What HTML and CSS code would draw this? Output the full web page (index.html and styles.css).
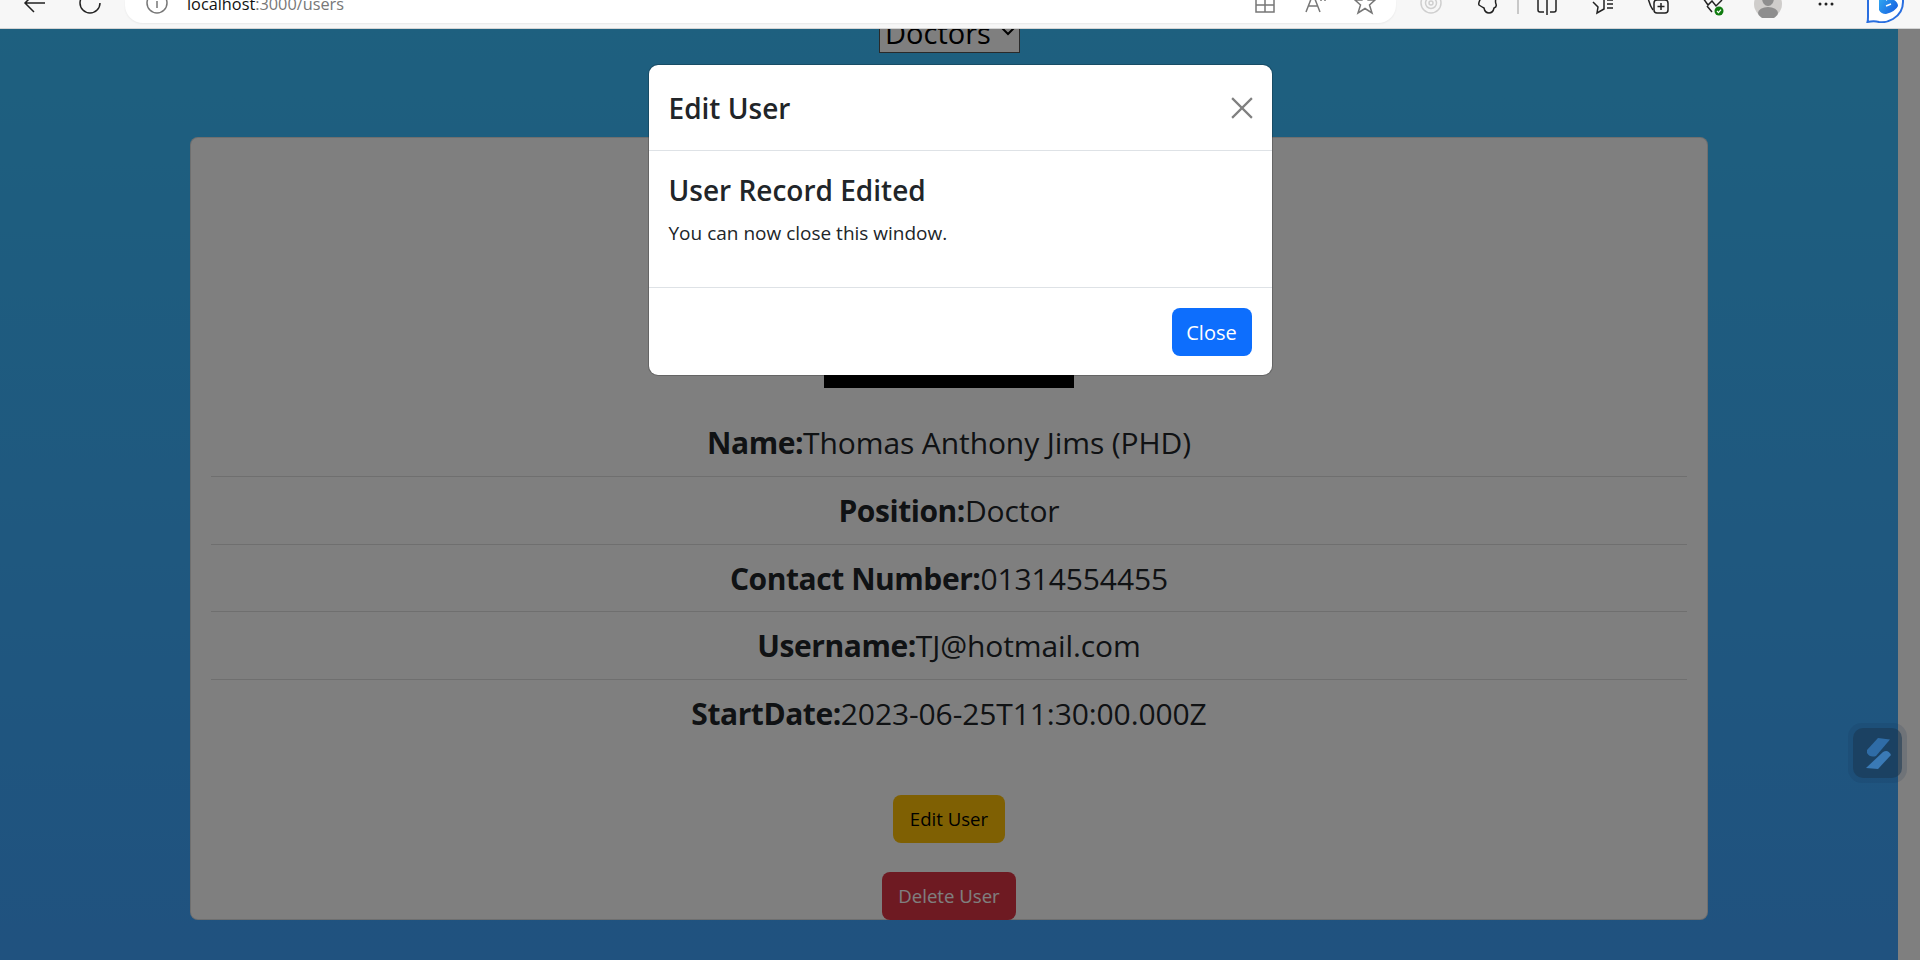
FILE: index.html
```html
<!DOCTYPE html>
<html lang="en">
<head>
    <meta charset="UTF-8">
    <title>Users</title>
    <link rel="stylesheet" href="styles.css">
</head>
<body>
    <div class="toolbar">
        <svg class="tb-icon tb-back" viewBox="0 0 32 32"><path d="M6 15H26M15 6L6 15L15 24"/></svg>
        <svg class="tb-icon tb-reload" viewBox="0 0 32 32"><path d="M26 15A10 10 0 1 1 16 5"/></svg>
        <div class="urlbar">
            <svg class="tb-icon tb-grey" viewBox="0 0 32 32"><circle cx="16" cy="15" r="10"/><path d="M16 13V20M16 9V11"/></svg>
            <span class="url"><span class="url-host">localhost</span>:3000/users</span>
            <div class="url-actions">
                <svg class="tb-icon tb-grey" viewBox="0 0 32 32"><path d="M7 4V24H25V4M7 17H25M16 4V24"/></svg>
                <svg class="tb-icon tb-grey" viewBox="0 0 32 32"><path d="M7 24L14 6L21 24M9.500 18H18.500M22 9V13M26 9V13"/></svg>
                <svg class="tb-icon tb-grey" viewBox="0 0 32 32"><path d="M16 5L19 12H26L20.500 17L23 25L16 20.500L9 25L11.500 17L6 12H13Z"/></svg>
            </div>
        </div>
        <svg class="tb-icon tb-faint tb-radar" viewBox="0 0 32 32"><circle cx="16" cy="15" r="10"/><circle cx="16" cy="15" r="5.500"/><circle cx="16" cy="15" r="2"/></svg>
        <svg class="tb-icon tb-puzzle" viewBox="0 0 32 32"><path d="M11 10Q8 15 9 17Q12 19 14 20Q15 25 19 25Q23 25 24 20Q27 19 26 16Q25 14 26 10"/></svg>
        <div class="tb-sep"></div>
        <svg class="tb-icon tb-split" viewBox="0 0 32 32"><path d="M16 8V27M7 8V22Q7 24 9 24H13M25 8V22Q25 24 23 24H19"/></svg>
        <svg class="tb-icon tb-next" viewBox="0 0 32 32"><path d="M6 14L11 19L10 25L17 21V10M20 12H26M20 16H26M20 20H26"/></svg>
        <svg class="tb-icon tb-next" viewBox="0 0 32 32"><path d="M5 10Q7 18 10 22"/><rect x="11" y="12" width="14" height="13" rx="3"/><path d="M18 15V22M14.500 18.500H21.500"/></svg>
        <svg class="tb-icon tb-heart" viewBox="0 0 32 32"><path d="M6 10L11 17L15 13L19 18L25 12M10 18L15 24"/><circle class="tb-badge" cx="22" cy="23" r="4.500"/><path class="tb-check" d="M20 23L21.500 24.600L24 21.600"/></svg>
        <svg class="tb-avatar" viewBox="0 0 28 28"><circle cx="14" cy="14" r="14" fill="#cfcdcb"/><ellipse cx="14" cy="8" rx="6" ry="8" fill="#8e8e8e"/><ellipse cx="14" cy="23" rx="10" ry="6" fill="#8e8e8e"/></svg>
        <svg class="tb-dots" viewBox="0 0 16 8"><circle cx="2" cy="4" r="1.500"/><circle cx="8" cy="4" r="1.500"/><circle cx="14" cy="4" r="1.500"/></svg>
        <svg class="tb-bing" viewBox="0 0 38 36">
            <defs>
                <linearGradient id="binggrad" x1="0" y1="0" x2="1" y2="1">
                    <stop offset="0" stop-color="#37bdf5"/>
                    <stop offset="1" stop-color="#1558e0"/>
                </linearGradient>
            </defs>
            <path d="M2 4V30Q2 33 1.500 35Q8 33.500 13 35Q20 36 27 32Q37 26 37 15V4" fill="#fff" stroke="#2a6fe0" stroke-width="2"/>
            <path d="M13 0H20V14L24 11Q32 14 32 19Q30 24 20 27Q15 27 13 23Z" fill="url(#binggrad)"/>
            <path d="M20 19L25 17" stroke="#fff" stroke-width="1.500"/>
        </svg>
    </div>

    <div class="viewport">
        <div class="page">
            <div class="select-strip">
                <select class="role-select">
                    <option>Doctors</option>
                </select>
            </div>
            <div class="card">
                <div class="user-photo"></div>
                <div class="info-row"><b>Name:</b>Thomas Anthony Jims (PHD)</div>
                <div class="info-row"><b>Position:</b>Doctor</div>
                <div class="info-row"><b>Contact Number:</b>01314554455</div>
                <div class="info-row"><b>Username:</b>TJ@hotmail.com</div>
                <div class="info-row"><b>StartDate:</b>2023-06-25T11:30:00.000Z</div>
                <button class="btn btn-edit">Edit User</button>
                <button class="btn btn-delete">Delete User</button>
            </div>
        </div>
        <div class="scrollbar"></div>

        <div class="backdrop">
            <div class="modal">
                <div class="modal-header">
                    <h5 class="modal-title">Edit User</h5>
                    <svg class="modal-close" viewBox="0 0 20 20"><path d="M1 1L19 19M19 1L1 19"/></svg>
                </div>
                <div class="modal-body">
                    <h4 class="modal-heading">User Record Edited</h4>
                    <p class="modal-text">You can now close this window.</p>
                </div>
                <div class="modal-footer">
                    <button class="btn btn-close">Close</button>
                </div>
            </div>
            <div class="float-widget">
                <div class="float-inner">
                    <svg class="float-logo" viewBox="33 28 49 50"><path d="M47 50L58 38L70 39.500L56 56Q50 58 47 53Z" fill="#2f6ca6"/><path d="M46 68L63 52Q68 49 71 55L58 69Z" fill="#3a7ab6"/></svg>
                </div>
            </div>
        </div>
    </div>
</body>
</html>
```

FILE: styles.css
```css
* {
    box-sizing: border-box;
}
html, body {
    height: 100%;
}
body {
    margin: 0;
    overflow: hidden;
    font-family: "Open Sans", "Liberation Sans", sans-serif;
    color: #212529;
}

/* browser bar, the top of it is cut off in the screenshot */
.toolbar {
    height: 29px;
    display: flex;
    align-items: flex-start;
    padding-left: 19px;
    background: #f7f7f7;
    border-bottom: 1px solid #d4d4d4;
    overflow: hidden;
}
.tb-icon {
    flex: none;
    width: 32px;
    height: 32px;
    margin-top: -12px;
    fill: none;
    stroke: #222;
    stroke-width: 1.5;
}
.tb-reload {
    margin-left: 23px;
}
.tb-grey {
    stroke: #777;
}
.tb-faint {
    stroke: #cfcfcf;
}
.urlbar {
    width: 1271px;
    height: 23px;
    margin-left: 19px;
    padding: 0 15px 0 16px;
    display: flex;
    align-items: flex-start;
    flex: none;
    background: #fff;
    border-radius: 0 0 18px 18px;
    box-shadow: 0 1px 2px rgba(0, 0, 0, 0.06);
}
.url {
    margin: -10px 0 0 14px;
    font-size: 16.300px;
    line-height: 28px;
    color: #777;
}
.url-host {
    color: #111;
}
.url-actions {
    margin-left: auto;
    display: flex;
    gap: 18px;
}
.tb-radar {
    margin-left: 19px;
}
.tb-puzzle {
    margin-left: 23px;
}
.tb-sep {
    width: 2px;
    height: 14px;
    margin-left: 15px;
    background: #c8c8c8;
}
.tb-split {
    margin-left: 12px;
}
.tb-next {
    margin-left: 24px;
}
.tb-heart {
    margin-left: 22px;
    overflow: visible;
}
.tb-badge {
    fill: #107c10;
    stroke: none;
}
.tb-check {
    stroke: #fff;
    stroke-width: 1.2;
}
.tb-avatar {
    flex: none;
    width: 28px;
    height: 28px;
    margin: -10px 0 0 25px;
}
.tb-dots {
    flex: none;
    width: 16px;
    height: 8px;
    margin: 0 0 0 36px;
    fill: #222;
}
.tb-bing {
    flex: none;
    width: 38px;
    height: 36px;
    margin: -13px 0 0 32px;
}

/* page */
.viewport {
    position: relative;
    height: 931px;
    display: flex;
    overflow: hidden;
}
.page {
    flex: 1;
    padding: 0 190px;
    background: linear-gradient(180deg, #3cc0ff 0%, #40a4fe 100%);
}
.scrollbar {
    width: 22px;
    background: #fff;
}
.select-strip {
    height: 24px;
    padding-left: 1px;
    display: flex;
    justify-content: center;
    align-items: flex-end;
}
.role-select {
    flex: none;
    width: 141px;
    height: 42px;
    padding-left: 5px;
    font-family: inherit;
    font-size: 29px;
    color: #000;
    appearance: none;
    background: #fff url("data:image/svg+xml,%3Csvg xmlns='http://www.w3.org/2000/svg' width='16' height='10'%3E%3Cpath d='M2 2L8 8L14 2' fill='none' stroke='%23000' stroke-width='2'/%3E%3C/svg%3E") no-repeat right 3px top 14px;
    border: 1px solid #555;
    border-radius: 0;
}
.card {
    height: 783px;
    margin-top: 84px;
    padding: 20px 20px 0;
    display: flex;
    flex-direction: column;
    align-items: center;
    background: #fff;
    border: 1px solid rgba(0, 0, 0, 0.125);
    border-radius: 8px;
}
.user-photo {
    flex: none;
    width: 250px;
    height: 230px;
    margin-bottom: 21px;
    background: #000;
}
.info-row {
    width: 100%;
    padding: 11px 0 10.800px;
    font-size: 30px;
    line-height: 45px;
    letter-spacing: -0.1px;
    text-align: center;
    border-bottom: 1px solid rgba(0, 0, 0, 0.125);
}
.info-row b {
    letter-spacing: -0.45px;
}
.info-row:last-of-type {
    border-bottom: none;
}
.btn {
    flex: none;
    height: 48px;
    padding: 0 15px;
    font-family: inherit;
    font-size: 18.600px;
    border: 1px solid transparent;
    border-radius: 8px;
}
.btn-edit {
    margin-top: 48px;
    padding: 0 15.500px;
    color: #000;
    background: #ffc107;
}
.btn-delete {
    margin-top: 29px;
    color: #fff;
    background: #dc3545;
}

/* modal on top */
.backdrop {
    position: absolute;
    inset: 0;
    padding-top: 35px;
    display: flex;
    justify-content: center;
    align-items: flex-start;
    background: rgba(0, 0, 0, 0.5);
}
.modal {
    width: 625px;
    height: 312px;
    background: #fff;
    border: 1px solid rgba(0, 0, 0, 0.2);
    border-radius: 10px;
    background-clip: padding-box;
}
.modal-header {
    height: 86px;
    padding: 0 19px 0 20px;
    display: flex;
    align-items: center;
    justify-content: space-between;
    border-bottom: 1px solid #dee2e6;
}
.modal-title {
    margin: 0;
    font-size: 28px;
    font-weight: 600;
}
.modal-close {
    width: 22px;
    height: 22px;
    fill: none;
    stroke: #808080;
    stroke-width: 2;
}
.modal-body {
    height: 136px;
    padding: 19px 20px 0;
}
.modal-heading {
    margin: 0 0 8px;
    font-size: 28px;
    font-weight: 600;
    line-height: 40px;
}
.modal-text {
    margin: 0;
    font-size: 19px;
    line-height: 30px;
}
.modal-footer {
    padding: 20px 20px 0;
    display: flex;
    justify-content: flex-end;
    border-top: 1px solid #dee2e6;
}
.btn-close {
    width: 80px;
    padding: 0;
    font-size: 20px;
    color: #fff;
    background: #0d6efd;
}
.float-widget {
    position: absolute;
    left: 1848px;
    top: 694px;
    width: 59px;
    height: 60px;
    padding: 5px;
    background: rgba(20, 50, 80, 0.15);
    border-radius: 14px;
}
.float-inner {
    width: 49px;
    height: 50px;
    background: rgba(25, 55, 80, 0.55);
    border-radius: 10px;
}
.float-logo {
    display: block;
    width: 49px;
    height: 50px;
}
```
